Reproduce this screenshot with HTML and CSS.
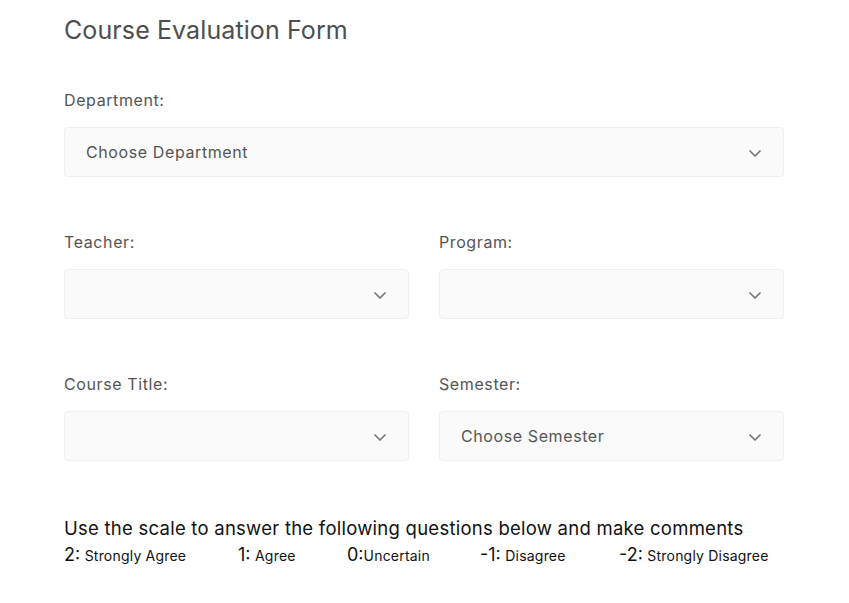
FILE: index.html
```html
<!DOCTYPE html>
<html lang="en">
<head>
<meta charset="utf-8">
<title>Course Evaluation Form</title>
<link rel="stylesheet" href="styles.css">
</head>
<body>
<main class="form">
  <h1 class="title">Course Evaluation Form</h1>

  <div class="field field-first">
    <label class="label">Department:</label>
    <div class="select"><span class="select-text">Choose Department</span>
      <svg class="chev" width="12" height="7" viewBox="0 0 12 7"><path d="M1 1 L6 6 L11 1" fill="none" stroke="#777" stroke-width="1.7" stroke-linecap="round" stroke-linejoin="round"/></svg>
    </div>
  </div>

  <div class="row">
    <div class="field">
      <label class="label">Teacher:</label>
      <div class="select"><span class="select-text"></span>
        <svg class="chev" width="12" height="7" viewBox="0 0 12 7"><path d="M1 1 L6 6 L11 1" fill="none" stroke="#777" stroke-width="1.7" stroke-linecap="round" stroke-linejoin="round"/></svg>
      </div>
    </div>
    <div class="field">
      <label class="label">Program:</label>
      <div class="select"><span class="select-text"></span>
        <svg class="chev" width="12" height="7" viewBox="0 0 12 7"><path d="M1 1 L6 6 L11 1" fill="none" stroke="#777" stroke-width="1.7" stroke-linecap="round" stroke-linejoin="round"/></svg>
      </div>
    </div>
  </div>

  <div class="row">
    <div class="field">
      <label class="label">Course Title:</label>
      <div class="select"><span class="select-text"></span>
        <svg class="chev" width="12" height="7" viewBox="0 0 12 7"><path d="M1 1 L6 6 L11 1" fill="none" stroke="#777" stroke-width="1.7" stroke-linecap="round" stroke-linejoin="round"/></svg>
      </div>
    </div>
    <div class="field">
      <label class="label">Semester:</label>
      <div class="select"><span class="select-text">Choose Semester</span>
        <svg class="chev" width="12" height="7" viewBox="0 0 12 7"><path d="M1 1 L6 6 L11 1" fill="none" stroke="#777" stroke-width="1.7" stroke-linecap="round" stroke-linejoin="round"/></svg>
      </div>
    </div>
  </div>

  <section class="scale">
    <p class="scale-heading">Use the scale to answer the following questions below and make comments</p>
    <div class="scale-row">
      <span class="item"><span class="num">2:</span> <span class="desc">Strongly Agree</span></span>
      <span class="item"><span class="num">1:</span> <span class="desc">Agree</span></span>
      <span class="item"><span class="num">0:</span><span class="desc">Uncertain</span></span>
      <span class="item"><span class="num">-1:</span> <span class="desc">Disagree</span></span>
      <span class="item"><span class="num">-2:</span> <span class="desc">Strongly Disagree</span></span>
    </div>
  </section>
</main>
</body>
</html>
```
FILE: styles.css
```css
* { box-sizing: border-box; }

html, body {
  margin: 0;
  padding: 0;
  background: #ffffff;
}

body {
  font-family: "Inter", "Open Sans", "Liberation Sans", sans-serif;
}

.form {
  width: 720px;
  margin-left: 64px;
  padding-top: 15px;
}

.title {
  margin: 0;
  font-size: 25px;
  line-height: 30px;
  font-weight: 400;
  letter-spacing: 0.1px;
  color: #4e4e4e;
}

.field-first {
  margin-top: 45px;
}

.row {
  display: grid;
  grid-template-columns: 345px 345px;
  column-gap: 30px;
  margin-top: 55px;
}

.label {
  display: block;
  font-size: 16px;
  line-height: 20px;
  letter-spacing: 0.6px;
  color: #555555;
  margin-bottom: 17px;
}

.select {
  height: 50px;
  display: flex;
  align-items: center;
  justify-content: space-between;
  padding: 0 22px 0 21px;
  background: #fafafa;
  border: 1px solid #efefef;
  border-radius: 4px;
}

.select-text {
  font-size: 16px;
  line-height: 20px;
  letter-spacing: 0.6px;
  color: #555555;
}

.chev {
  flex: none;
  margin-top: 2px;
}

.scale {
  margin-top: 56px;
  color: #111111;
}

.scale-heading {
  margin: 0;
  font-size: 18.5px;
  line-height: 22px;
  letter-spacing: 0.25px;
}

.scale-row {
  display: grid;
  grid-template-columns: 174px 109px 133px 139px auto;
  margin-top: 5px;
  line-height: 22px;
}

.num {
  font-size: 18px;
}

.desc {
  font-size: 14px;
  letter-spacing: 0.2px;
}
```
